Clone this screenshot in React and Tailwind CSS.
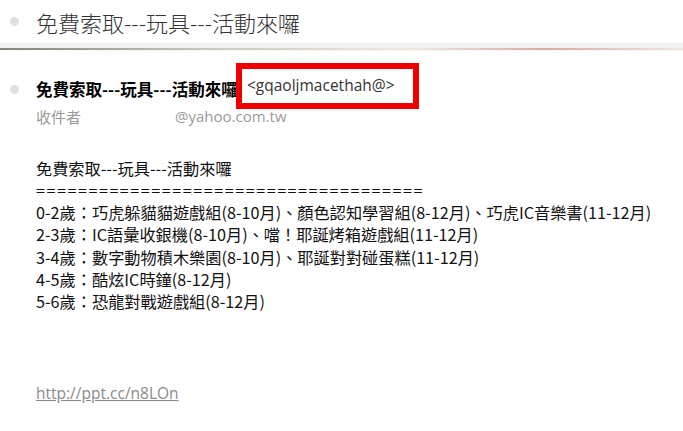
const lines = [
  '0-2歲：巧虎躲貓貓遊戲組(8-10月)、顏色認知學習組(8-12月)、巧虎IC音樂書(11-12月)',
  '2-3歲：IC語彙收銀機(8-10月)、噹！耶誕烤箱遊戲組(11-12月)',
  '3-4歲：數字動物積木樂園(8-10月)、耶誕對對碰蛋糕(11-12月)',
  '4-5歲：酷炫IC時鐘(8-12月)',
  '5-6歲：恐龍對戰遊戲組(8-12月)',
]

const cjk = { fontFamily: '"Noto Sans CJK TC", "Noto Sans", sans-serif' }
const latin = { fontFamily: '"Open Sans", "Noto Sans", sans-serif' }

export default function App() {
  return (
    <div className="w-[683px] h-[431px] bg-white overflow-hidden text-[#222]" style={cjk}>
      {/* 標題列 */}
      <div className="h-[43px] flex items-center pl-[10px]">
        <span className="w-[9px] h-[9px] rounded-full bg-[#e0e0e0]" />
        <h1 className="ml-[17px] text-[22px] font-light text-[#333] leading-none">免費索取---玩具---活動來囉</h1>
      </div>
      <div className="h-[5px] bg-[#f2f1f4]" />
      <div className="h-[2px] bg-[linear-gradient(to_right,#85857a_0%,#c9c7bd_30%,#efe9e5_60%,#d9aaa2_80%,#f1e6e3_100%)]" />
      <div className="h-px bg-[#faf6f4]" />

      {/* 寄件者 */}
      <div className="relative pl-[10px] pt-[30px]">
        <div className="flex items-center">
          <span className="w-[9px] h-[9px] rounded-full bg-[#e0e0e0]" />
          <span className="ml-[17px] text-[16.5px] font-bold text-black leading-none">免費索取---玩具---活動來囉</span>
        </div>
        <div className="flex items-center mt-[11px] ml-[26px] text-[15px] text-[#9a9a9a] leading-none">
          <span>收件者</span>
          <span className="ml-[94px]" style={latin}>@yahoo.com.tw</span>
        </div>
        <div className="absolute left-[236px] top-[12px] w-[183px] h-[46px] border-[6px] border-[#ee0000] bg-white flex items-center pl-[5px]">
          <span className="text-[15.5px] text-[#333] leading-none" style={latin}>&lt;gqaoljmacethah@&gt;</span>
        </div>
      </div>

      {/* 內文 */}
      <div className="pl-[36px] pt-[33px] text-[16.2px] leading-[22.3px] text-[#111]">
        <p>免費索取---玩具---活動來囉</p>
        <p className="tracking-[1.5px]">=====================================</p>
        {lines.map((l) => (
          <p key={l}>{l}</p>
        ))}
      </div>

      <div className="pl-[36px] mt-[67px]">
        <a className="text-[15.5px] text-[#8a8a8a] underline" style={latin}>http://ppt.cc/n8LOn</a>
      </div>
    </div>
  )
}
